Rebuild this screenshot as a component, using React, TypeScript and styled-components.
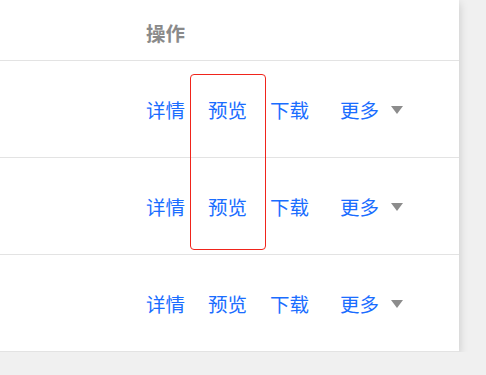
import styled, { createGlobalStyle } from 'styled-components'

const GlobalStyle = createGlobalStyle`
  html, body {
    margin: 0;
    padding: 0;
    background: #f0f0f0;
    font-family: "Microsoft YaHei", "Noto Sans CJK SC", "Noto Sans", sans-serif;
  }
`

const rows = [1, 2, 3]

const Card = styled.div`
  position: relative;
  width: 459px;
  background: #fff;
  box-shadow: 0 3px 9px rgba(0, 0, 0, 0.18);
`

const Row = styled.div<{ $head?: boolean }>`
  display: grid;
  grid-template-columns: 146px 1fr;
  align-items: center;
  height: ${(p) => (p.$head ? '60px' : '96px')};
  border-bottom: 1px solid #e3e3e3;

  &:last-child {
    border-bottom: none;
  }
`

const HeadCell = styled.div`
  grid-column: 2;
  font-size: 19.5px;
  font-weight: bold;
  color: #8a8a8a;
  padding-top: 4px;
`

const Actions = styled.div`
  grid-column: 2;
  display: flex;
  align-items: center;
`

const Link = styled.a<{ $gap?: number }>`
  font-size: 19.5px;
  color: #1a6dff;
  text-decoration: none;
  margin-right: ${(p) => p.$gap ?? 23}px;
  cursor: pointer;
`

const More = styled.span`
  display: flex;
  align-items: center;
  gap: 12px;
`

const Caret = styled.span`
  width: 0;
  height: 0;
  border-left: 6px solid transparent;
  border-right: 6px solid transparent;
  border-top: 8px solid #8c8c8c;
  margin-top: 2px;
`

const Highlight = styled.div`
  position: absolute;
  left: 190px;
  top: 74px;
  width: 74px;
  height: 174px;
  border: 1px solid #f0241b;
  border-radius: 4px;
  pointer-events: none;
`

export default function App() {
  return (
    <>
      <GlobalStyle />
      <Card>
        <Row $head>
          <HeadCell>操作</HeadCell>
        </Row>
        {rows.map((r) => (
          <Row key={r}>
            <Actions>
              <Link>详情</Link>
              <Link>预览</Link>
              <Link $gap={31}>下载</Link>
              <More>
                <Link $gap={0}>更多</Link>
                <Caret />
              </More>
            </Actions>
          </Row>
        ))}
        <Highlight />
      </Card>
    </>
  )
}
